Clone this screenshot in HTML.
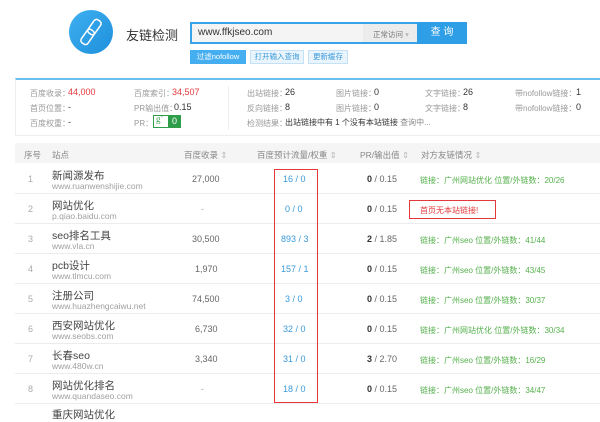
<!DOCTYPE html>
<html><head><meta charset="utf-8"><style>
*{margin:0;padding:0;box-sizing:border-box}
body{width:600px;height:415px;overflow:hidden;background:#fff;font-family:"Liberation Sans","Noto Sans CJK SC",sans-serif;color:#333;position:relative}
.a{position:absolute;white-space:nowrap}
.lbl{color:#999;font-size:8px}
.v{color:#333;font-size:9px}
.red{color:#e4393c}
.hd{color:#888;font-size:8.5px}
.nm{font-size:10.5px;color:#444}
.url{font-size:8.5px;color:#a0a0a0}
.num{font-size:9px;color:#666}
.bl{font-size:9px;color:#3a9ad9}
.gr{font-size:8px;color:#55b04c}
.sep{position:absolute;left:15px;width:585px;height:1px;background:#ececec}
</style></head><body>
<!-- logo -->
<div class="a" style="left:69px;top:10px;width:44px;height:44px;border-radius:50%;background:linear-gradient(135deg,#3fb0f0,#1e8fdc)"></div>
<svg class="a" style="left:69px;top:10px" width="44" height="44" viewBox="0 0 44 44">
<g fill="none" stroke="#fff" stroke-width="1.5" transform="rotate(35 22 22)">
<rect x="18" y="8" width="8" height="16" rx="3"/>
<rect x="18" y="20" width="8" height="16" rx="3"/>
</g></svg>
<div class="a" style="left:126px;top:25px;font-size:13px;color:#333">友链检测</div>
<!-- search -->
<div class="a" style="left:190px;top:22px;width:227px;height:22px;border:2px solid #3aa3e8;border-right:none;background:#f4f4f4"></div>
<div class="a" style="left:198px;top:27px;font-size:10px;color:#333">www.ffkjseo.com</div>
<div class="a" style="left:363px;top:24px;width:54px;height:18px;background:#ececec"></div>
<div class="a" style="left:373px;top:29px;font-size:7.5px;color:#777">正常访问 <span style="color:#bbb">▾</span></div>
<div class="a" style="left:417px;top:22px;width:50px;height:22px;background:#2e9ee6;color:#fff;font-size:10px;text-align:center;line-height:22px">查 询</div>
<div class="a" style="left:190px;top:50px;width:56px;height:14px;background:#44aef0;color:#fff;font-size:7.5px;text-align:center;line-height:14px">过滤nofollow</div>
<div class="a" style="left:250px;top:50px;width:54px;height:14px;background:#e9f4fc;border:1px solid #c4e1f5;color:#3a9ad9;font-size:7.5px;text-align:center;line-height:12px">打开输入查询</div>
<div class="a" style="left:308px;top:50px;width:40px;height:14px;background:#e9f4fc;border:1px solid #c4e1f5;color:#3a9ad9;font-size:7.5px;text-align:center;line-height:12px">更新缓存</div>
<!-- stats panel -->
<div class="a" style="left:15px;top:78px;width:585px;height:58px;border-top:2px solid #6cc0f0;border-left:1px solid #eee;border-bottom:1px solid #eee"></div>
<div class="a" style="left:228px;top:86px;width:1px;height:44px;background:#eee"></div>
<div class="a lbl" style="left:30px;top:88px">百度收录：</div><div class="a v red" style="left:68px;top:87px">44,000</div>
<div class="a lbl" style="left:30px;top:103px">首页位置：</div><div class="a v" style="left:68px;top:102px">-</div>
<div class="a lbl" style="left:30px;top:118px">百度权重：</div><div class="a v" style="left:68px;top:117px">-</div>
<div class="a lbl" style="left:134px;top:88px">百度索引：</div><div class="a v red" style="left:172px;top:87px">34,507</div>
<div class="a lbl" style="left:134px;top:103px">PR输出值：</div><div class="a v" style="left:174px;top:102px">0.15</div>
<div class="a lbl" style="left:134px;top:118px">PR：</div>
<div class="a" style="left:153px;top:115px;width:28px;height:13px;border:1px solid #2e9e4a;background:#fff"></div>
<div class="a" style="left:156px;top:114px;font-size:9px;color:#2e9e4a;font-family:'Liberation Serif',serif">g<sup style="font-size:5px">+</sup></div>
<div class="a" style="left:168px;top:115px;width:13px;height:13px;background:#2e9e4a;color:#fff;font-size:9px;text-align:center;line-height:13px">0</div>
<div class="a lbl" style="left:247px;top:88px">出站链接：</div><div class="a v" style="left:285px;top:87px">26</div>
<div class="a lbl" style="left:247px;top:103px">反向链接：</div><div class="a v" style="left:285px;top:102px">8</div>
<div class="a lbl" style="left:247px;top:118px">检测结果：</div><div class="a" style="left:285px;top:117px;font-size:8px;color:#333">出站链接中有 1 个没有本站链接 <span style="color:#888">查询中...</span></div>
<div class="a lbl" style="left:336px;top:88px">图片链接：</div><div class="a v" style="left:374px;top:87px">0</div>
<div class="a lbl" style="left:336px;top:103px">图片链接：</div><div class="a v" style="left:374px;top:102px">0</div>
<div class="a lbl" style="left:425px;top:88px">文字链接：</div><div class="a v" style="left:463px;top:87px">26</div>
<div class="a lbl" style="left:425px;top:103px">文字链接：</div><div class="a v" style="left:463px;top:102px">8</div>
<div class="a lbl" style="left:515px;top:88px">带nofollow链接：</div><div class="a v" style="left:576px;top:87px">1</div>
<div class="a lbl" style="left:515px;top:103px">带nofollow链接：</div><div class="a v" style="left:576px;top:102px">0</div>
<!-- table header -->
<div class="a" style="left:15px;top:143px;width:585px;height:20px;background:#f5f5f5"></div>
<div class="a hd" style="left:24px;top:149px">序号</div>
<div class="a hd" style="left:52px;top:149px">站点</div>
<div class="a hd" style="left:184px;top:149px">百度收录 <span style="color:#bbb">⇕</span></div>
<div class="a hd" style="left:257px;top:149px">百度预计流量/权重 <span style="color:#bbb">⇕</span></div>
<div class="a hd" style="left:360px;top:149px">PR/输出值 <span style="color:#bbb">⇕</span></div>
<div class="a hd" style="left:421px;top:149px">对方友链情况 <span style="color:#bbb">⇕</span></div>
<!-- rows -->
<div class="sep" style="top:193px"></div><div class="sep" style="top:223px"></div><div class="sep" style="top:253px"></div><div class="sep" style="top:283px"></div><div class="sep" style="top:313px"></div><div class="sep" style="top:343px"></div><div class="sep" style="top:373px"></div><div class="sep" style="top:403px"></div>

<div class="a num" style="left:28px;top:174px;color:#aaa">1</div>
<div class="a nm" style="left:52px;top:168px">新闻源发布</div><div class="a url" style="left:52px;top:181px">www.ruanwenshijie.com</div>
<div class="a num" style="left:192px;top:174px">27,000</div><div class="a bl" style="left:283px;top:174px">16 / 0</div>
<div class="a num" style="left:367px;top:174px"><b style="color:#333">0</b> / 0.15</div>
<div class="a gr" style="left:420px;top:175px">链接：广州网站优化 位置/外链数：20/26</div>

<div class="a num" style="left:28px;top:204px;color:#aaa">2</div>
<div class="a nm" style="left:52px;top:198px">网站优化</div><div class="a url" style="left:52px;top:211px">p.qiao.baidu.com</div>
<div class="a num" style="left:201px;top:204px;color:#aaa">-</div><div class="a bl" style="left:285px;top:204px">0 / 0</div>
<div class="a num" style="left:367px;top:204px"><b style="color:#333">0</b> / 0.15</div>
<div class="a" style="left:409px;top:200px;width:87px;height:19px;border:1.5px solid #e4393c"></div>
<div class="a" style="left:420px;top:205px;font-size:8px;color:#e4393c">首页无本站链接!</div>

<div class="a num" style="left:28px;top:234px;color:#aaa">3</div>
<div class="a nm" style="left:52px;top:228px">seo排名工具</div><div class="a url" style="left:52px;top:241px">www.vla.cn</div>
<div class="a num" style="left:192px;top:234px">30,500</div><div class="a bl" style="left:281px;top:234px">893 / 3</div>
<div class="a num" style="left:367px;top:234px"><b style="color:#333">2</b> / 1.85</div>
<div class="a gr" style="left:420px;top:235px">链接：广州seo 位置/外链数：41/44</div>

<div class="a num" style="left:28px;top:264px;color:#aaa">4</div>
<div class="a nm" style="left:52px;top:258px">pcb设计</div><div class="a url" style="left:52px;top:271px">www.tlmcu.com</div>
<div class="a num" style="left:195px;top:264px">1,970</div><div class="a bl" style="left:281px;top:264px">157 / 1</div>
<div class="a num" style="left:367px;top:264px"><b style="color:#333">0</b> / 0.15</div>
<div class="a gr" style="left:420px;top:265px">链接：广州seo 位置/外链数：43/45</div>

<div class="a num" style="left:28px;top:294px;color:#aaa">5</div>
<div class="a nm" style="left:52px;top:288px">注册公司</div><div class="a url" style="left:52px;top:301px">www.huazhengcaiwu.net</div>
<div class="a num" style="left:192px;top:294px">74,500</div><div class="a bl" style="left:285px;top:294px">3 / 0</div>
<div class="a num" style="left:367px;top:294px"><b style="color:#333">0</b> / 0.15</div>
<div class="a gr" style="left:420px;top:295px">链接：广州seo 位置/外链数：30/37</div>

<div class="a num" style="left:28px;top:324px;color:#aaa">6</div>
<div class="a nm" style="left:52px;top:318px">西安网站优化</div><div class="a url" style="left:52px;top:331px">www.seobs.com</div>
<div class="a num" style="left:195px;top:324px">6,730</div><div class="a bl" style="left:283px;top:324px">32 / 0</div>
<div class="a num" style="left:367px;top:324px"><b style="color:#333">0</b> / 0.15</div>
<div class="a gr" style="left:420px;top:325px">链接：广州网站优化 位置/外链数：30/34</div>

<div class="a num" style="left:28px;top:354px;color:#aaa">7</div>
<div class="a nm" style="left:52px;top:348px">长春seo</div><div class="a url" style="left:52px;top:361px">www.480w.cn</div>
<div class="a num" style="left:195px;top:354px">3,340</div><div class="a bl" style="left:283px;top:354px">31 / 0</div>
<div class="a num" style="left:367px;top:354px"><b style="color:#333">3</b> / 2.70</div>
<div class="a gr" style="left:420px;top:355px">链接：广州seo 位置/外链数：16/29</div>

<div class="a num" style="left:28px;top:384px;color:#aaa">8</div>
<div class="a nm" style="left:52px;top:378px">网站优化排名</div><div class="a url" style="left:52px;top:391px">www.quandaseo.com</div>
<div class="a num" style="left:201px;top:384px;color:#aaa">-</div><div class="a bl" style="left:283px;top:384px">18 / 0</div>
<div class="a num" style="left:367px;top:384px"><b style="color:#333">0</b> / 0.15</div>
<div class="a gr" style="left:420px;top:385px">链接：广州seo 位置/外链数：34/47</div>

<div class="a nm" style="left:52px;top:407px">重庆网站优化</div>
<!-- red highlight -->
<div class="a" style="left:274px;top:169px;width:44px;height:234px;border:1.5px solid #e4393c"></div>
</body></html>
